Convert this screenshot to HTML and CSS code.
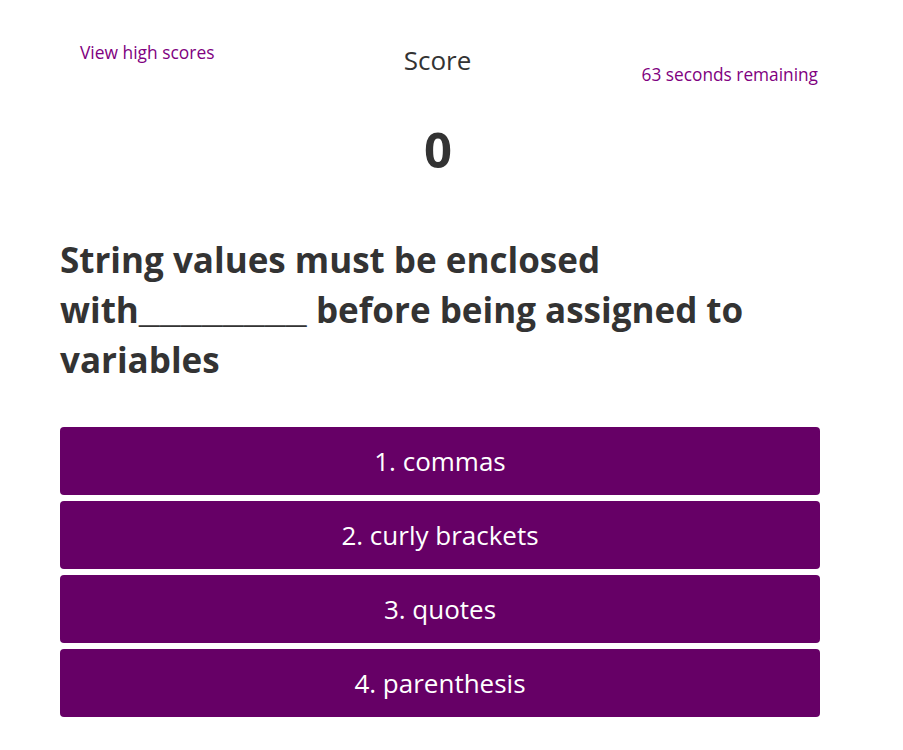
FILE: index.html
```html
<!DOCTYPE html>
<html>
<head>
<meta charset="utf-8">
<link rel="stylesheet" href="styles.css">
</head>
<body>
<div class="page">
  <header class="top">
    <a class="high" href="#">View high scores</a>
    <div class="score">
      <div class="score-label">Score</div>
    </div>
    <div class="timer">63 seconds remaining</div>
  </header>
  <div class="score-value">0</div>
  <h1 class="question">String values must be enclosed <span class="nowrap">with<span class="blank">________</span></span> before being assigned to variables</h1>
  <div class="answers">
    <button class="answer">1. commas</button>
    <button class="answer">2. curly brackets</button>
    <button class="answer">3. quotes</button>
    <button class="answer">4. parenthesis</button>
  </div>
</div>
</body>
</html>
```

FILE: styles.css
```css
html, body {
  margin: 0;
  padding: 0;
  background: #fff;
}
body {
  font-family: "Open Sans", "Noto Sans", sans-serif;
  color: #333;
}
.page {
  width: 760px;
  margin-left: 60px;
  padding-top: 40px;
}
.top {
  display: grid;
  grid-template-columns: 1fr auto 1fr;
  align-items: start;
}
.high {
  color: #800080;
  text-decoration: none;
  font-size: 17.4px;
  margin-left: 20px;
  line-height: 24px;
  justify-self: start;
}
.score {
  padding-right: 5px;
}
.score-label {
  font-size: 26px;
  line-height: 32px;
  margin-top: 4px;
}
.timer {
  justify-self: end;
  color: #800080;
  font-size: 17.3px;
  margin-top: 23px;
  line-height: 24px;
  margin-right: 2px;
}
.score-value {
  text-align: center;
  font-size: 49px;
  font-weight: 700;
  line-height: 60px;
  margin-top: 32px;
  margin-left: -4px;
}
.question {
  font-size: 35px;
  font-weight: 700;
  line-height: 50px;
  margin: 56px 0 0 0;
  color: #333;
}
.nowrap {
  white-space: nowrap;
}
.blank {
  font-family: "Liberation Mono", monospace;
  line-height: 0;
}
.answers {
  display: flex;
  flex-direction: column;
  gap: 6px;
  margin-top: 42px;
}
.answer {
  height: 68px;
  border: none;
  border-radius: 4px;
  background: #660066;
  color: #fff;
  font-family: inherit;
  font-size: 26px;
  padding: 0;
  cursor: pointer;
}
```
